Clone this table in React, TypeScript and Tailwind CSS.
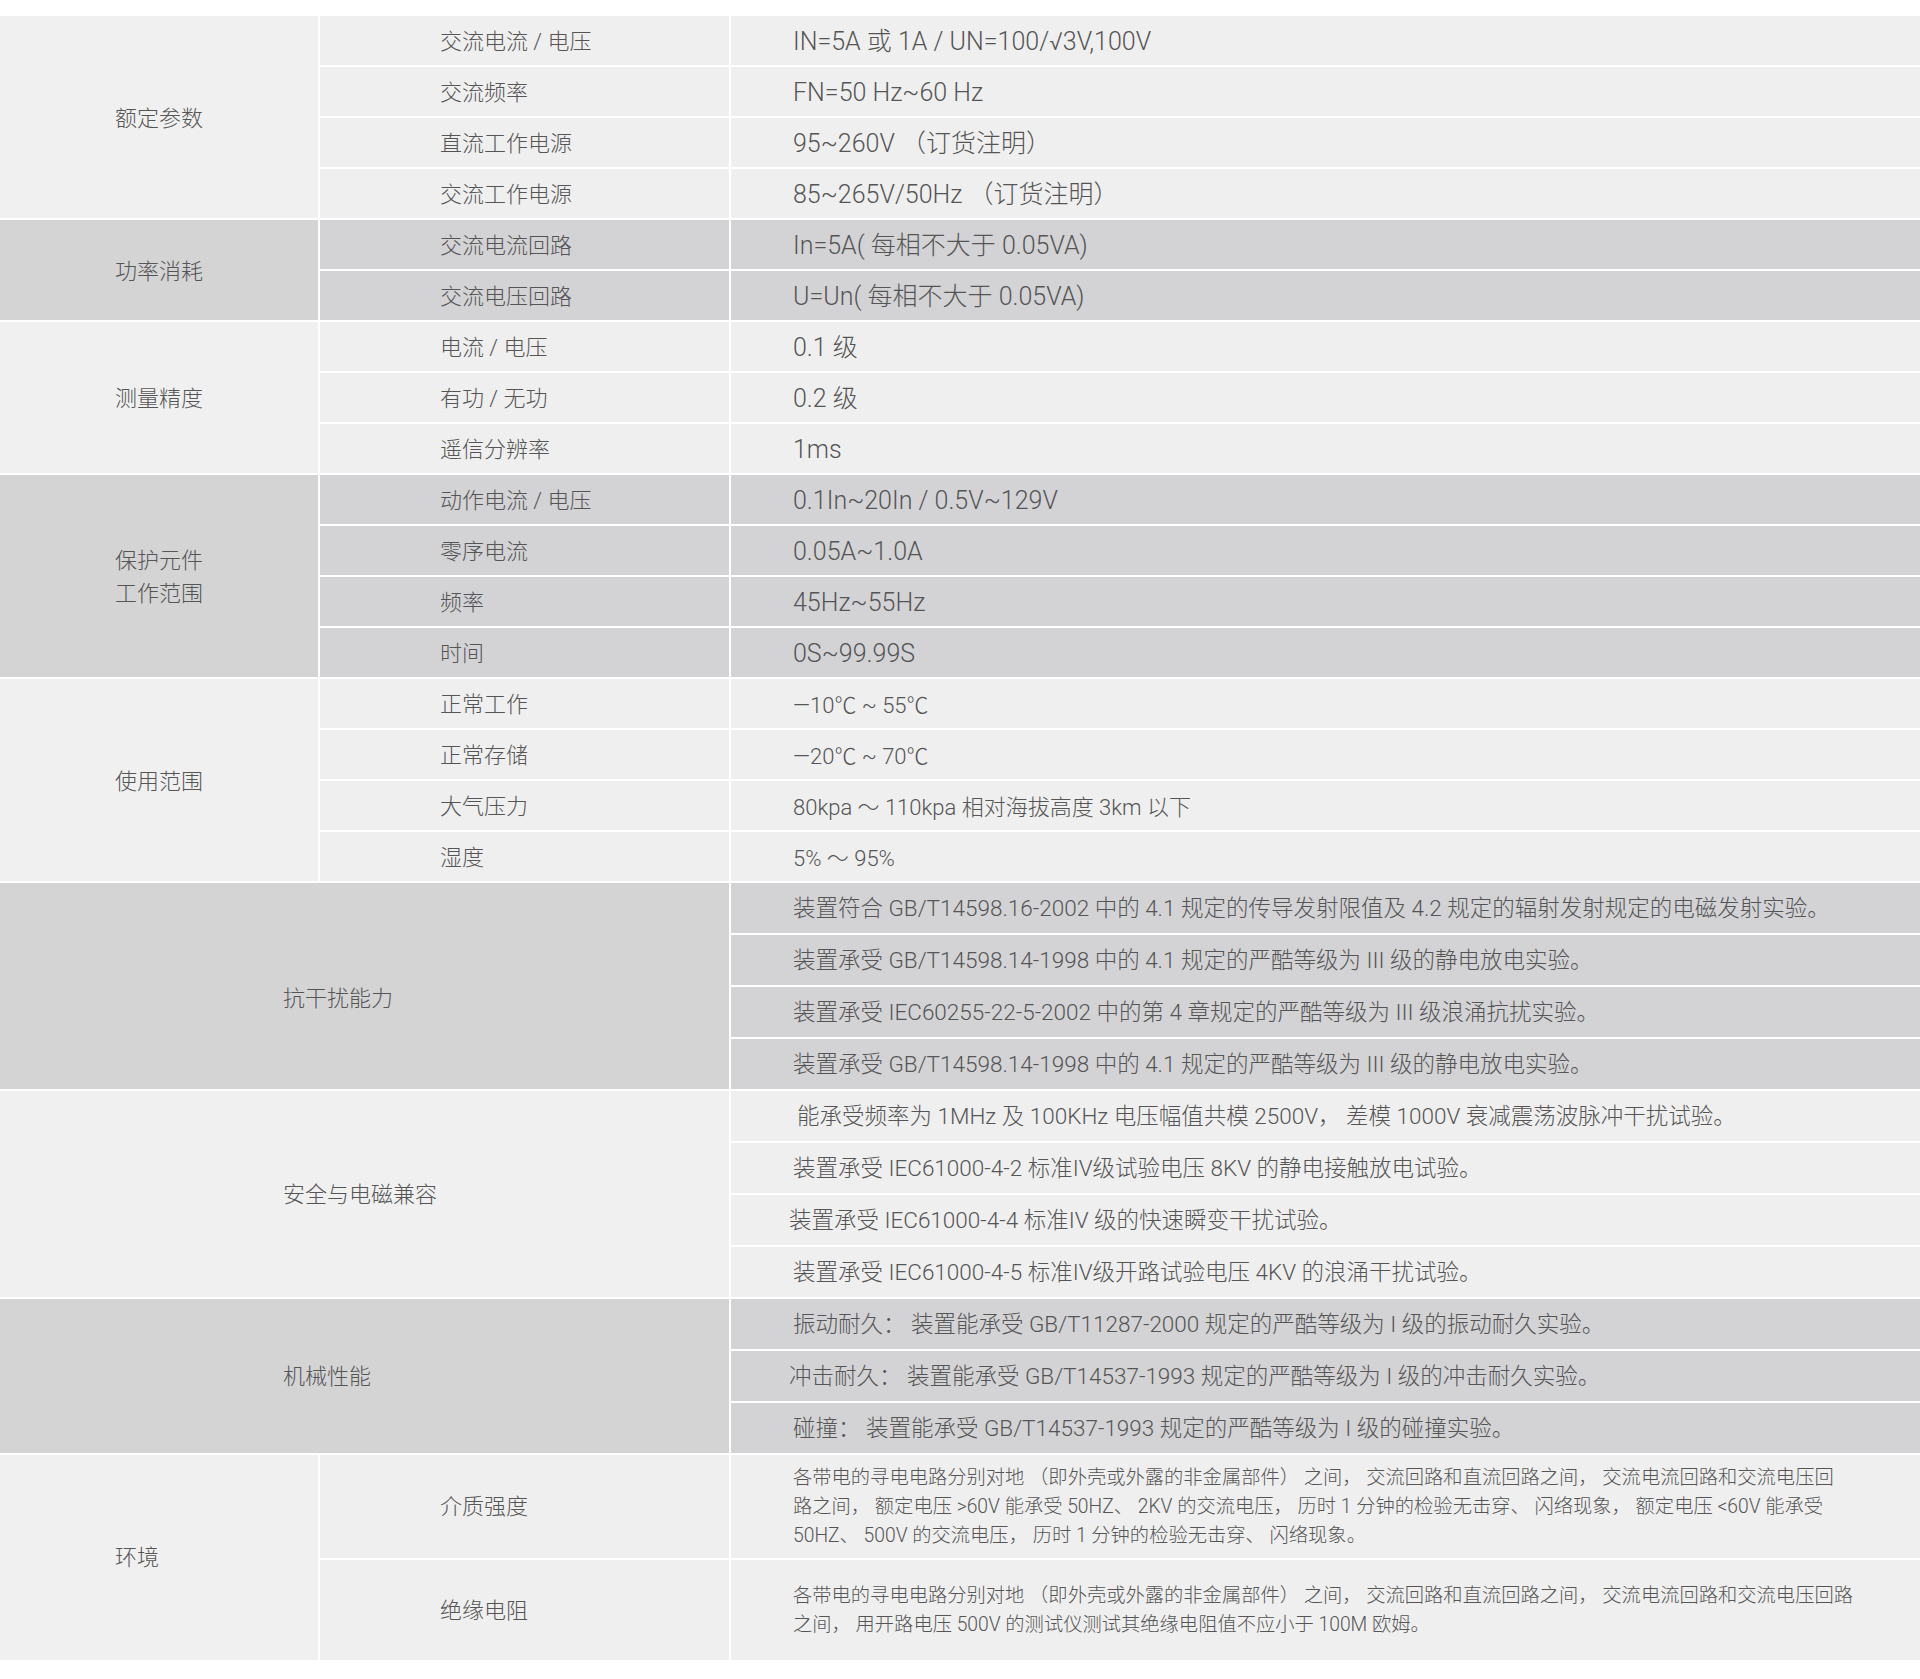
import React from "react";

type Row = { k?: string; v: React.ReactNode; pad?: string };

type Group = {
  label: React.ReactNode;
  labelPad?: string;
  dark?: boolean;
  merged?: boolean;
  rowH: string;
  valueText: string;
  rows: Row[];
};

const groups: Group[] = [
  {
    label: "额定参数",
    rowH: "h-[49px]",
    valueText: "text-[25px] pt-[3px]",
    rows: [
      { k: "交流电流 / 电压", v: "IN=5A 或 1A / UN=100/√3V,100V" },
      { k: "交流频率", v: "FN=50 Hz~60 Hz" },
      { k: "直流工作电源", v: "95~260V （订货注明）" },
      { k: "交流工作电源", v: "85~265V/50Hz （订货注明）" },
    ],
  },
  {
    label: "功率消耗",
    dark: true,
    rowH: "h-[49px]",
    valueText: "text-[25px] pt-[3px]",
    rows: [
      { k: "交流电流回路", v: "In=5A( 每相不大于 0.05VA)" },
      { k: "交流电压回路", v: "U=Un( 每相不大于 0.05VA)" },
    ],
  },
  {
    label: "测量精度",
    rowH: "h-[49px]",
    valueText: "text-[25px] pt-[3px]",
    rows: [
      { k: "电流 / 电压", v: "0.1 级" },
      { k: "有功 / 无功", v: "0.2 级" },
      { k: "遥信分辨率", v: "1ms" },
    ],
  },
  {
    label: (
      <span className="leading-[33px]">
        保护元件
        <br />
        工作范围
      </span>
    ),
    dark: true,
    rowH: "h-[49px]",
    valueText: "text-[25px] pt-[3px]",
    rows: [
      { k: "动作电流 / 电压", v: "0.1In~20In / 0.5V~129V" },
      { k: "零序电流", v: "0.05A~1.0A" },
      { k: "频率", v: "45Hz~55Hz" },
      { k: "时间", v: "0S~99.99S" },
    ],
  },
  {
    label: "使用范围",
    rowH: "h-[49px]",
    valueText: "text-[22px] pt-[3px]",
    rows: [
      { k: "正常工作", v: "—10℃ ~ 55℃" },
      { k: "正常存储", v: "—20℃ ~ 70℃" },
      { k: "大气压力", v: "80kpa ～ 110kpa 相对海拔高度 3km 以下" },
      { k: "湿度", v: "5% ～ 95%" },
    ],
  },
  {
    label: "抗干扰能力",
    labelPad: "pt-[24px]",
    dark: true,
    merged: true,
    rowH: "h-[50px]",
    valueText: "text-[22.5px] pt-[2px]",
    rows: [
      { v: "装置符合 GB/T14598.16-2002 中的 4.1 规定的传导发射限值及 4.2 规定的辐射发射规定的电磁发射实验。" },
      { v: "装置承受 GB/T14598.14-1998 中的 4.1 规定的严酷等级为 III 级的静电放电实验。" },
      { v: "装置承受 IEC60255-22-5-2002 中的第 4 章规定的严酷等级为 III 级浪涌抗扰实验。" },
      { v: "装置承受 GB/T14598.14-1998 中的 4.1 规定的严酷等级为 III 级的静电放电实验。" },
    ],
  },
  {
    label: "安全与电磁兼容",
    merged: true,
    rowH: "h-[50px]",
    valueText: "text-[22.5px] pt-[2px]",
    rows: [
      { v: "能承受频率为 1MHz 及 100KHz 电压幅值共模 2500V， 差模 1000V 衰减震荡波脉冲干扰试验。", pad: "pl-[66px]" },
      { v: "装置承受 IEC61000-4-2 标准IV级试验电压 8KV 的静电接触放电试验。" },
      { v: "装置承受 IEC61000-4-4 标准IV 级的快速瞬变干扰试验。", pad: "pl-[58px]" },
      { v: "装置承受 IEC61000-4-5 标准IV级开路试验电压 4KV 的浪涌干扰试验。" },
    ],
  },
  {
    label: "机械性能",
    dark: true,
    merged: true,
    rowH: "h-[50px]",
    valueText: "text-[22.5px] pt-[2px]",
    rows: [
      { v: "振动耐久： 装置能承受 GB/T11287-2000 规定的严酷等级为 I 级的振动耐久实验。" },
      { v: "冲击耐久： 装置能承受 GB/T14537-1993 规定的严酷等级为 I 级的冲击耐久实验。", pad: "pl-[58px]" },
      { v: "碰撞： 装置能承受 GB/T14537-1993 规定的严酷等级为 I 级的碰撞实验。" },
    ],
  },
];

function SpecGroup({ g }: { g: Group }) {
  const bg = g.dark ? "bg-[#d3d3d5]" : "bg-[#efefef]";
  const labelBg = g.dark ? "bg-[#d4d4d5]" : "bg-[#f0f0f0]";
  return (
    <div className="flex gap-[2px]">
      {g.merged ? (
        <div className={`w-[729px] shrink-0 flex items-center pl-[283px] text-[22px] ${g.labelPad ?? ""} ${labelBg}`}>
          {g.label}
        </div>
      ) : (
        <>
          <div className={`w-[318px] shrink-0 flex items-center pl-[115px] text-[22px] pt-[2px] ${labelBg}`}>
            {g.label}
          </div>
          <div className="w-[409px] shrink-0 flex flex-col gap-[2px]">
            {g.rows.map((r, i) => (
              <div key={i} className={`${g.rowH} flex items-center pl-[120px] pt-[2px] text-[22px] ${bg}`}>
                {r.k}
              </div>
            ))}
          </div>
        </>
      )}
      <div className="flex-1 flex flex-col gap-[2px]">
        {g.rows.map((r, i) => (
          <div
            key={i}
            className={`${g.rowH} flex items-center whitespace-nowrap ${r.pad ?? "pl-[62px]"} ${g.valueText} ${bg}`}
          >
            {r.v}
          </div>
        ))}
      </div>
    </div>
  );
}

export default function App() {
  return (
    <div className="w-[1920px] min-h-[1679px] bg-white pt-[16px] pb-[18px] font-['Roboto','Noto_Sans_CJK_SC',sans-serif] text-[#555555] font-light">
      <div className="flex flex-col gap-[2px]">
        {groups.map((g, i) => (
          <SpecGroup key={i} g={g} />
        ))}

        {/* 环境 */}
        <div className="flex gap-[2px]">
          <div className="w-[318px] shrink-0 flex items-center pl-[115px] text-[22px] bg-[#f0f0f0]">
            环境
          </div>
          <div className="w-[409px] shrink-0 flex flex-col gap-[2px]">
            <div className="h-[103px] flex items-center pl-[120px] text-[22px] bg-[#efefef]">介质强度</div>
            <div className="h-[100px] flex items-center pl-[120px] text-[22px] bg-[#efefef]">绝缘电阻</div>
          </div>
          <div className="flex-1 flex flex-col gap-[2px]">
            <div className="h-[103px] flex items-center pl-[62px] bg-[#efefef]">
              <p className="text-[19.3px] leading-[29px] whitespace-nowrap">
                各带电的寻电电路分别对地 （即外壳或外露的非金属部件） 之间， 交流回路和直流回路之间， 交流电流回路和交流电压回
                <br />
                路之间， 额定电压 &gt;60V 能承受 50HZ、 2KV 的交流电压， 历时 1 分钟的检验无击穿、 闪络现象， 额定电压 &lt;60V 能承受
                <br />
                50HZ、 500V 的交流电压， 历时 1 分钟的检验无击穿、 闪络现象。
              </p>
            </div>
            <div className="h-[100px] flex items-center pl-[62px] bg-[#efefef]">
              <p className="text-[19.3px] leading-[29px] whitespace-nowrap">
                各带电的寻电电路分别对地 （即外壳或外露的非金属部件） 之间， 交流回路和直流回路之间， 交流电流回路和交流电压回路
                <br />
                之间， 用开路电压 500V 的测试仪测试其绝缘电阻值不应小于 100M 欧姆。
              </p>
            </div>
          </div>
        </div>
      </div>
    </div>
  );
}
